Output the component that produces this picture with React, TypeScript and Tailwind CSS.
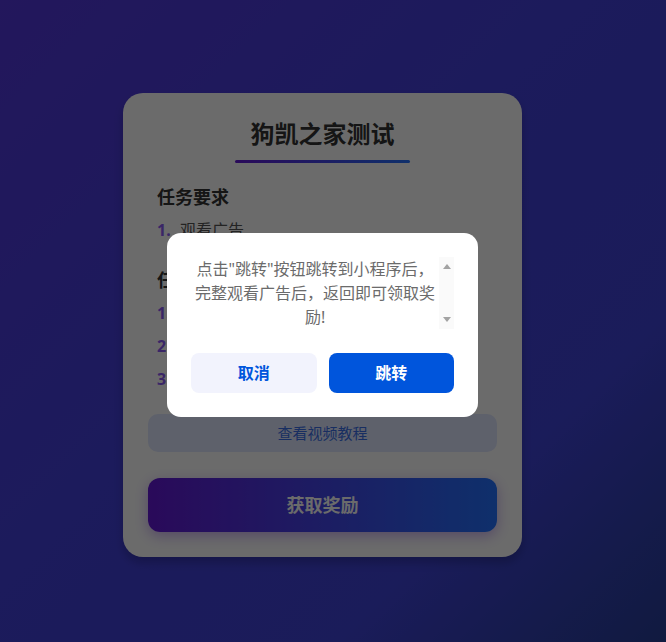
import { useState } from "react";

const steps = ["打开小程序", "完整观看广告", "返回领取奖励"];

export default function App() {
  const [showModal, setShowModal] = useState(true);

  return (
    <div
      className="relative min-h-screen w-full bg-[linear-gradient(135deg,#5337db_0%,#4341db_45%,#3f43d6_75%,#283e98_100%)]"
      style={{ fontFamily: '"Noto Sans", "Noto Sans CJK SC", sans-serif' }}
    >
      <div className="flex min-h-screen items-start justify-center pt-[93px] pr-[21px]">
        <div className="w-[399px] rounded-[20px] bg-white px-[25px] pt-[25px] pb-[25px] shadow-[0_6px_10px_rgba(0,0,0,0.2)]">
          <h1 className="text-center text-[24px] leading-[32px] font-bold text-[#333]">
            狗凯之家测试
          </h1>
          <div className="mx-auto mt-[10px] h-[3px] w-[175px] rounded-full bg-[linear-gradient(90deg,#6418d6,#2472ff)]" />

          <div className="px-[9px]">
            <h2 className="mt-[21px] text-[18px] leading-[26px] font-bold text-[#333]">
              任务要求
            </h2>
            <div className="mt-[8px] flex items-center text-[16px] leading-[24px]">
              <span className="w-[23px] font-bold text-[#8b5cf6]">1.</span>
              <span className="text-[#555]">观看广告</span>
            </div>

            <h2 className="mt-[25px] text-[18px] leading-[26px] font-bold text-[#333]">
              任务步骤
            </h2>
            <ul className="mt-[8px] flex flex-col gap-[9px]">
              {steps.map((s, i) => (
                <li key={s} className="flex items-center text-[16px] leading-[24px]">
                  <span className="w-[23px] font-bold text-[#8b5cf6]">{i + 1}.</span>
                  <span className="text-[#555]">{s}</span>
                </li>
              ))}
            </ul>
          </div>

          <button className="mt-[23px] h-[38px] w-full rounded-[10px] bg-[#e0e7ff] text-[15px] text-[#3b6fe8]">
            查看视频教程
          </button>
          <button className="mt-[26px] h-[54px] w-full rounded-[12px] bg-[linear-gradient(90deg,#6418d6,#2472ff)] text-[18px] font-bold text-white shadow-[0_4px_14px_rgba(100,24,214,0.35)]">
            获取奖励
          </button>
        </div>
      </div>

      {showModal && (
        <div className="absolute inset-0 flex items-start justify-center bg-black/[0.58] pt-[233px] pr-[21px]">
          <div className="w-[311px] rounded-[14px] bg-white p-[24px]">
            <div className="flex h-[72px]">
              <p className="w-[249px] text-center text-[16px] leading-[24px] text-[#6b6b6b]">
                点击"跳转"按钮跳转到小程序后，完整观看广告后，返回即可领取奖励!
              </p>
              {/* scroll track */}
              <div className="flex w-[15px] flex-col items-center justify-between bg-[#fafafa] py-[7px]">
                <span className="h-0 w-0 border-x-[4px] border-b-[5px] border-x-transparent border-b-[#a3a3a3]" />
                <span className="h-0 w-0 border-x-[4px] border-t-[5px] border-x-transparent border-t-[#a3a3a3]" />
              </div>
            </div>
            <div className="mt-[24px] flex gap-[12px]">
              <button
                className="h-[40px] flex-1 rounded-[8px] bg-[#f2f3fd] text-[16px] font-bold text-[#0055dc]"
                onClick={() => setShowModal(false)}
              >
                取消
              </button>
              <button className="h-[40px] flex-1 rounded-[8px] bg-[#0055dc] text-[16px] font-bold text-white">
                跳转
              </button>
            </div>
          </div>
        </div>
      )}
    </div>
  );
}
